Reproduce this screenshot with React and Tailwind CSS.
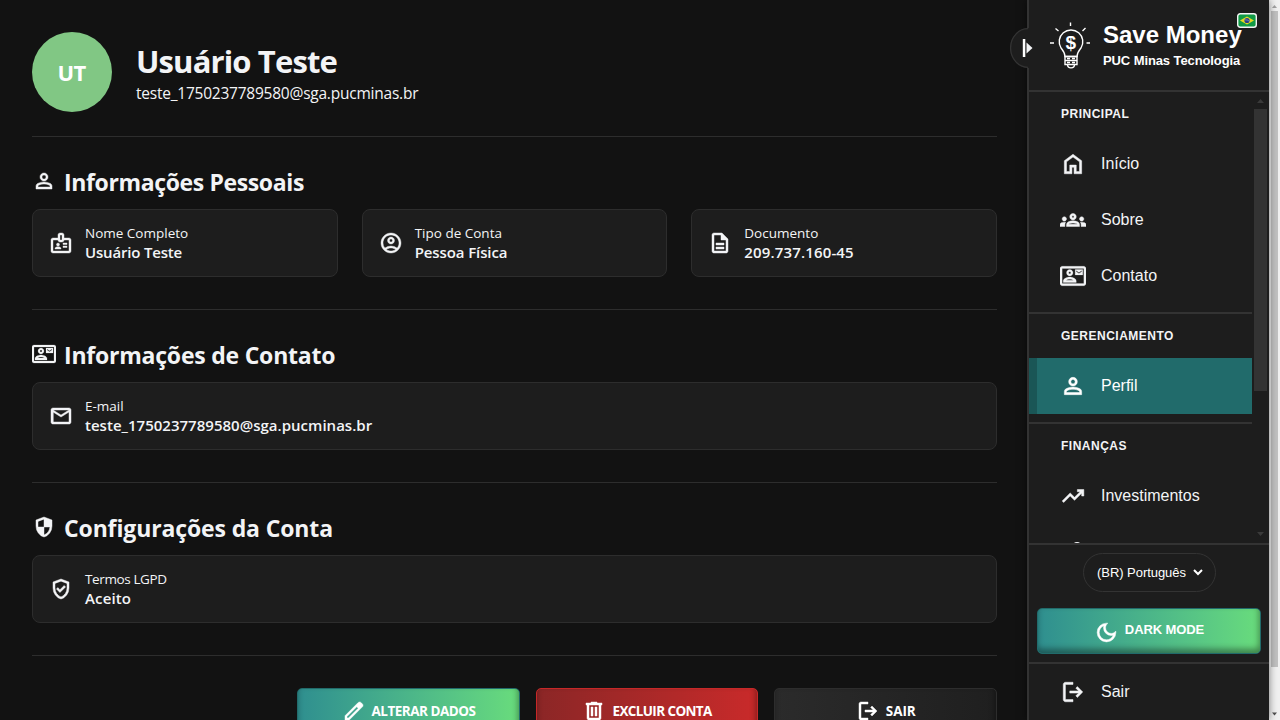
import React from 'react';
import { MdOutlineContactMail, MdOutlineBadge, MdOutlineAccountCircle, MdOutlineGroups } from 'react-icons/md';

const paths = {
  person: 'M480-480q-66 0-113-47t-47-113q0-66 47-113t113-47q66 0 113 47t47 113q0 66-47 113t-113 47ZM160-160v-112q0-34 17.5-62.5T224-378q62-31 126-46.5T480-440q66 0 130 15.5T736-378q29 15 46.5 43.5T800-272v112H160Zm80-80h480v-32q0-11-5.5-20T700-306q-54-27-109-40.5T480-360q-56 0-111 13.5T260-306q-9 5-14.5 14t-5.5 20v32Zm240-320q33 0 56.5-23.5T560-640q0-33-23.5-56.5T480-720q-33 0-56.5 23.5T400-640q0 33 23.5 56.5T480-560Z',
  description: 'M320-240h320v-80H320v80Zm0-160h320v-80H320v80ZM240-80q-33 0-56.5-23.5T160-160v-640q0-33 23.5-56.5T240-880h320l240 240v480q0 33-23.5 56.5T720-80H240Zm280-520v-200H240v640h480v-440H520Z',
  mail: 'M160-160q-33 0-56.5-23.5T80-240v-480q0-33 23.5-56.5T160-800h640q33 0 56.5 23.5T880-720v480q0 33-23.5 56.5T800-160H160Zm320-280L160-640v400h640v-400L480-440Zm0-80 320-200H160l320 200ZM160-640v-80 480-400Z',
  shield: 'M480-80q-139-35-229.5-159.5T160-516v-244l320-120 320 120v244q0 152-90.5 276.5T480-80Zm0-84q97-30 162-118.5T718-480H480v-315l-240 90v207q0 7 2 18h238v316Z',
  verified: 'm438-338 226-226-57-57-169 169-84-84-57 57 141 141Zm42 258q-139-35-229.5-159.5T160-516v-244l320-120 320 120v244q0 152-90.5 276.5T480-80Zm0-84q104-33 172-132t68-220v-189l-240-90-240 90v189q0 121 68 220t172 132Z',
  edit: 'M200-200h57l391-391-57-57-391 391v57Zm-80 80v-170l528-527q12-11 26.5-17t30.5-6q16 0 31 6t26 18l55 56q12 11 17.5 26t5.5 30q0 16-5.5 30.5T817-647L290-120H120Z',
  trash: 'M280-120q-33 0-56.5-23.5T200-200v-520h-40v-80h200v-40h240v40h200v80h-40v520q0 33-23.5 56.5T680-120H280Zm400-600H280v520h400v-520ZM360-280h80v-360h-80v360Zm160 0h80v-360h-80v360Z',
  logout: 'M200-120q-33 0-56.5-23.5T120-200v-560q0-33 23.5-56.5T200-840h280v80H200v560h280v80H200Zm440-160-55-58 102-102H360v-80h327L585-622l55-58 200 200-200 200Z',
  home: 'M240-200h120v-240h240v240h120v-360L480-740 240-560v360Zm-80 80v-480l320-240 320 240v480H520v-240h-80v240H160Z',
  trending: 'm136-240-56-56 296-298 160 160 208-206H640v-80h240v240h-80v-104L536-320 376-480 136-240Z',
  moon: 'M480-120q-150 0-255-105T120-480q0-150 105-255t255-105q14 0 27.5 1t26.5 3q-41 29-65.5 75.5T444-660q0 90 63 153t153 63q55 0 101-24.5t75-65.5q2 13 3 26.5t1 27.5q0 150-105 255T480-120Zm0-80q88 0 158-48.5T740-375q-20 5-40 8t-40 3q-123 0-209.5-86.5T364-660q0-20 3-40t8-40q-78 32-126.5 102T200-480q0 116 82 198t198 82Z',
};

function Icon({ name, className = 'size-6' }) {
  return (
    <svg viewBox="0 -960 960 960" fill="currentColor" stroke="currentColor" strokeWidth="18" className={`shrink-0 ${className}`}>
      <path d={paths[name]} />
    </svg>
  );
}

function Section({ icon, title, tracking, children }) {
  return (
    <section className="border-t border-[#2d2d2d] pt-8 pb-8">
      <h2 className="mb-2 flex h-8 items-center gap-2">
        <span className="flex h-8 items-start">{icon}</span>
        <span className={`-mt-[7px] text-[23px] leading-8 font-bold whitespace-nowrap ${tracking}`}>{title}</span>
      </h2>
      {children}
    </section>
  );
}

function InfoCard({ icon, label, value, labelTracking = '', tracking = '' }) {
  return (
    <div className="flex h-17 items-center gap-3 rounded-lg border border-[#2d2d2d] bg-[#1d1d1d] px-4">
      {icon}
      <div className="flex flex-col whitespace-nowrap">
        <span className={`text-[13.5px] leading-[19px] ${labelTracking}`}>{label}</span>
        <span className={`-mt-px mb-px text-[15px] leading-5 font-semibold ${tracking}`}>{value}</span>
      </div>
    </div>
  );
}

function NavSection({ title, children }) {
  return (
    <div className="border-b-2 border-[#333] pb-2">
      <div className="flex h-11 items-center pl-8 text-[12px] font-bold tracking-[0.5px]">{title}</div>
      {children}
    </div>
  );
}

function NavItem({ icon, label, active }) {
  return (
    <div className={`flex h-14 items-center gap-[15px] border-l-8 pl-[23px] text-[16px] ${active ? 'border-[#1a5656] bg-[#216b6b] text-white' : 'border-transparent'}`}>
      {icon}
      <span>{label}</span>
    </div>
  );
}

function Logo() {
  return (
    <svg viewBox="0 0 42 48" className="h-12 w-[42px] shrink-0" fill="none" stroke="#fff" strokeWidth="1.4">
      <path d="M21.500 0.500v3.500M6.500 6.500l3 2.500M36.500 6l-3 3M1 21h4M37.500 21h3.500" />
      <path d="M16 34.500c0-4-2-6-4-8.500a11.800 11.800 0 1 1 20 0c-2 2.500-4 4.500-4 8.500z" />
      <path d="M16 34.500h12v8H16zM16 38.500h12M18 36.500h3M23 36.500h3M18 40.500h3M23 40.500h3M18.500 42.500c0 4.500 7 4.500 7 0" />
      <text x="21.800" y="27" textAnchor="middle" fontSize="19" fontFamily="Liberation Sans, sans-serif" fill="#fff" stroke="none" fontWeight="bold">$</text>
    </svg>
  );
}

function Flag() {
  return (
    <svg viewBox="0 0 20 15" className="absolute top-[13px] left-[208px] h-[15px] w-5">
      <rect x="0.700" y="0.700" width="18.600" height="13.600" rx="2.500" fill="#109a45" stroke="#f4f4f4" strokeWidth="1.400" />
      <path d="M3 7.500L10 3.500L17 7.500L10 11.500Z" fill="#e8d820" />
      <circle cx="10" cy="7.500" r="2.600" fill="#2b3f88" />
      <path d="M7.500 6.800q3 -.3 5 1.500" stroke="#9fb6d8" strokeWidth=".6" fill="none" />
    </svg>
  );
}

function ActionButton({ icon, label, className, tracking }) {
  return (
    <button className={`flex h-[46px] items-center justify-center rounded-[5px] border text-[13.5px] font-bold whitespace-nowrap text-white shadow-[inset_-1px_-4px_6px_rgba(0,0,0,0.4)] ${className}`}>
      {icon}
      <span className={tracking}>{label}</span>
    </button>
  );
}

function Sidebar() {
  return (
    <aside className="relative flex h-[720px] w-[242px] shrink-0 flex-col border-l-2 border-[#333] bg-[#1d1d1d] font-['Liberation_Sans',Arial,sans-serif] text-[#f3f4f6] shadow-[0_0_8px_rgba(0,0,0,0.5)]">
      <div className="absolute top-7 -left-[19px] h-10 w-[26px] rounded-l-full bg-[#1d1d1d]">
        <svg viewBox="0 0 26 40" className="h-10 w-[26px]" fill="none">
          <path d="M18 0.700A17.400 19.300 0 0 0 18 39.300" stroke="#333" strokeWidth="1.300" />
          <path d="M12.800 11h2.500v18h-2.500z" fill="#fff" />
          <path d="M16.500 14.500L22.500 20L16.500 25.500z" fill="#f3f4f6" />
        </svg>
      </div>
      <header className="relative flex h-[92px] shrink-0 gap-3 border-b-2 border-[#333] pt-[22px] pl-5">
        <Logo />
        <div className="flex flex-col font-bold whitespace-nowrap text-white">
          <span className="text-[24px] leading-[26px]">Save Money</span>
          <span className="mt-[5px] text-[13px] leading-4 tracking-[-0.1px]">PUC Minas Tecnologia</span>
        </div>
        <Flag />
      </header>
      <div className="flex h-[451px] shrink-0 overflow-hidden">
        <nav className="w-[223px] shrink-0">
          <NavSection title="PRINCIPAL">
            <NavItem icon={<Icon name="home" className="size-[26px]" />} label="Início" />
            <NavItem icon={<MdOutlineGroups className="size-[26px] shrink-0 stroke-current stroke-[0.4] [&_path[fill=none]]:hidden" />} label="Sobre" />
            <NavItem icon={<MdOutlineContactMail className="size-[26px] shrink-0 stroke-current stroke-[0.2] [&_path[fill=none]]:hidden" />} label="Contato" />
          </NavSection>
          <NavSection title="GERENCIAMENTO">
            <NavItem active icon={<Icon name="person" className="size-[26px]" />} label="Perfil" />
          </NavSection>
          <NavSection title="FINANÇAS">
            <NavItem icon={<Icon name="trending" className="size-[26px]" />} label="Investimentos" />
            <div className="flex h-14 items-start justify-center pt-[18px] pr-[128px]">
              <span className="h-4 w-2 rounded-t-full bg-[#f3f4f6]" />
            </div>
          </NavSection>
        </nav>
        <div className="ml-[2px] flex h-full w-[13px] flex-col items-center justify-between">
          <svg viewBox="0 0 13 17" className="h-[17px] w-[13px] shrink-0"><path d="M3 11L6.500 7L10 11z" fill="#3a3a3a" /></svg>
          <div className="h-[282px] w-full shrink-0 bg-[#333]" />
          <div className="grow" />
          <svg viewBox="0 0 13 17" className="h-[17px] w-[13px] shrink-0"><path d="M3 6L6.500 10L10 6z" fill="#3a3a3a" /></svg>
        </div>
      </div>
      <div className="flex h-[121px] shrink-0 flex-col items-center border-y-2 border-[#333] pt-2">
        <div className="flex h-[39px] w-[133px] items-center gap-[7px] rounded-full border border-[#333] pl-[13.5px] text-[13px] whitespace-nowrap text-white">
          <span className="tracking-[-0.05px]">(BR) Português</span>
          <svg viewBox="0 0 10 7" className="h-[7px] w-[10px]" fill="none" stroke="#fff" strokeWidth="2"><path d="M1 1L5 5L9 1" /></svg>
        </div>
        <ActionButton
          icon={<Icon name="moon" className="mt-[2px] mr-[6px] size-[25px]" />}
          label="DARK MODE"
          className="mt-4 w-[224px] border-[#216b6b] bg-linear-to-r from-[#2f8f8f] to-[#69dc7c]"
          tracking="-mt-[2px] text-[13px] tracking-[-0.1px]"
        />
      </div>
      <NavItem icon={<Icon name="logout" className="size-[26px]" />} label="Sair" />
    </aside>
  );
}

export default function App() {
  return (
    <div className="flex h-[720px] w-[1280px] overflow-hidden bg-[#121212] font-['Open_Sans',sans-serif] text-[#f3f4f6]">
      <main className="h-[720px] w-[1027px] shrink-0 overflow-hidden py-8 pr-[30px] pl-8">
        <div className="flex h-[104px] items-start gap-6">
          <div className="flex size-20 items-center justify-center rounded-full bg-[#81c784] pr-[1px] text-[22px] font-bold tracking-[-0.6px] text-white">UT</div>
          <div className="flex flex-col pt-[9px]">
            <h1 className="text-[31px] leading-10 font-bold tracking-[-0.86px] whitespace-nowrap">Usuário Teste</h1>
            <span className="text-[15.5px] leading-6 tracking-[-0.23px]">teste_1750237789580@sga.pucminas.br</span>
          </div>
        </div>
        <Section icon={<Icon name="person" />} title="Informações Pessoais" tracking="tracking-[-0.37px]">
          <div className="grid grid-cols-3 gap-6">
            <InfoCard icon={<MdOutlineBadge className="size-6 shrink-0 stroke-current stroke-[0.4] [&_path[fill=none]]:hidden" />} label="Nome Completo" value="Usuário Teste" tracking="tracking-[-0.18px]" />
            <InfoCard icon={<MdOutlineAccountCircle className="size-6 shrink-0 stroke-current stroke-[0.4] [&_path[fill=none]]:hidden" />} label="Tipo de Conta" value="Pessoa Física" tracking="tracking-[-0.1px]" />
            <InfoCard icon={<Icon name="description" />} label="Documento" value="209.737.160-45" tracking="tracking-[0.15px]" />
          </div>
        </Section>
        <Section icon={<MdOutlineContactMail className="size-6 stroke-current stroke-[0.2] [&_path[fill=none]]:hidden" />} title="Informações de Contato" tracking="tracking-[-0.22px]">
          <InfoCard icon={<Icon name="mail" />} label="E-mail" value="teste_1750237789580@sga.pucminas.br" tracking="tracking-[0.02px]" />
        </Section>
        <Section icon={<Icon name="shield" />} title="Configurações da Conta" tracking="tracking-[-0.13px]">
          <InfoCard icon={<Icon name="verified" />} label="Termos LGPD" value="Aceito" labelTracking="tracking-[-0.38px]" tracking="tracking-[0.15px]" />
        </Section>
        <div className="flex justify-end gap-4 border-t border-[#2d2d2d] pt-8">
          <ActionButton icon={<Icon name="edit" className="mr-[6px] size-6" />} label="ALTERAR DADOS" tracking="tracking-[-0.5px]" className="w-[222.6px] border-[#216b6b] bg-linear-to-r from-[#2f8f8f] to-[#69dc7c]" />
          <ActionButton icon={<Icon name="trash" className="mr-[6px] size-6" />} label="EXCLUIR CONTA" tracking="tracking-[-0.62px]" className="w-[222.6px] border-[#c62828] bg-linear-to-r from-[#8b2626] to-[#c92a2a]" />
          <ActionButton icon={<Icon name="logout" className="mr-[6px] size-6" />} label="SAIR" tracking="tracking-[-0.1px]" className="w-[222.6px] border-[#2d2d2d] bg-linear-to-r from-[#2b2b2b] to-[#1f1f1f]" />
        </div>
      </main>
      <Sidebar />
      <div className="flex h-[720px] w-[11px] shrink-0 flex-col items-center bg-[#f1f1f1]">
        <svg viewBox="0 0 11 11" className="size-[11px] shrink-0"><path d="M3 8L5.500 5L8 8z" fill="#a3a3a3" /></svg>
        <div className="h-[656px] w-[7px] shrink-0 bg-[#c1c1c1]" />
        <div className="grow" />
        <svg viewBox="0 0 11 11" className="size-[11px] shrink-0"><path d="M3 3.500L5.500 6.500L8 3.500z" fill="#505050" /></svg>
      </div>
    </div>
  );
}
